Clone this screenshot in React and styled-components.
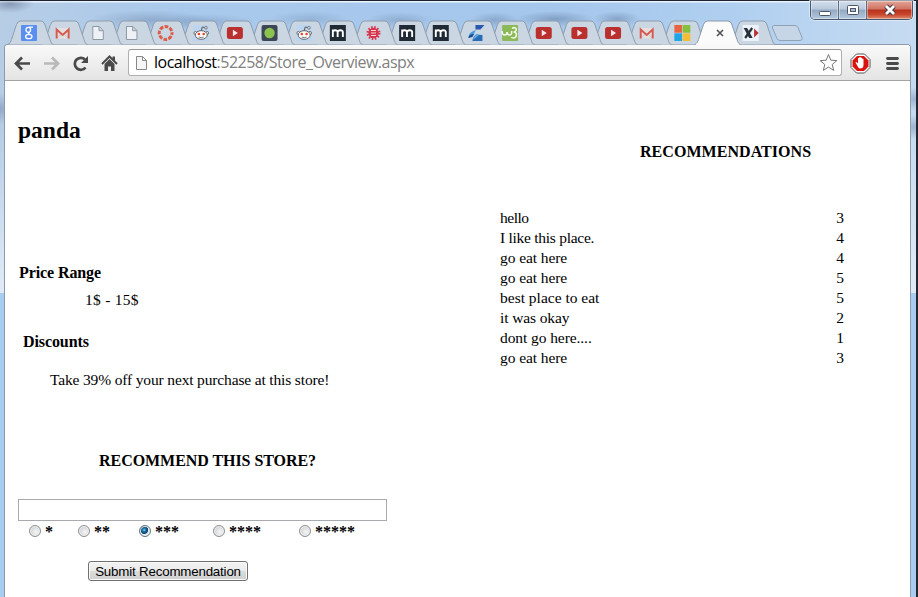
import React, { useState } from "react";
import styled, { createGlobalStyle } from "styled-components";

const GlobalStyle = createGlobalStyle`
  * { box-sizing: border-box; }
  body { margin: 0; overflow: hidden; }
  h1, h2, p { margin: 0; }
`;

const Window = styled.div`
  position: relative;
  width: 918px;
  height: 597px;
  display: flex;
  flex-direction: column;
  border-top: 1px solid #1d2230;
  border-right: 2px solid #23272f;
  background:
    radial-gradient(ellipse 24px 9px at 10px 3px, rgba(70, 80, 110, 0.4), transparent),
    radial-gradient(ellipse 60px 10px at 150px 19px, rgba(70, 95, 130, 0.28), transparent),
    radial-gradient(ellipse 50px 8px at 205px 21px, rgba(70, 95, 130, 0.25), transparent),
    radial-gradient(ellipse 40px 8px at 310px 18px, rgba(70, 95, 130, 0.2), transparent),
    radial-gradient(ellipse 34px 8px at 400px 19px, rgba(70, 95, 130, 0.25), transparent),
    radial-gradient(ellipse 24px 8px at 495px 19px, rgba(70, 95, 130, 0.3), transparent),
    radial-gradient(ellipse 40px 8px at 555px 18px, rgba(70, 95, 130, 0.38), transparent),
    radial-gradient(ellipse 24px 8px at 617px 18px, rgba(70, 95, 130, 0.35), transparent),
    radial-gradient(ellipse 20px 16px at 0 108px, rgba(60, 90, 130, 0.3), transparent),
    radial-gradient(ellipse 14px 12px at 914px 98px, rgba(60, 90, 130, 0.3), transparent),
    radial-gradient(ellipse 14px 12px at 914px 126px, rgba(60, 90, 130, 0.3), transparent),
    linear-gradient(180deg, #e9f3fc 0, #e9f3fc 1px, transparent 2px),
    linear-gradient(180deg, transparent 130px, #dfeaf6 285px, #dfeaf6 292px, #a9cdf1 292px),
    linear-gradient(90deg, #b7cde6 0, #a9c9ec 20%, #a5c7ec 60%, #b0cff0 80%, #c6dbf1 100%);
`;

const TabStrip = styled.div`
  position: relative;
  z-index: 1;
  display: flex;
  height: 43px;
  padding: 19px 0 0 8px;
`;

const TabShape = styled.svg`
  position: relative;
  z-index: ${(p) => p.$layer};
  flex: none;
  width: 46px;
  height: 26px;
  margin-right: -11.65px;
  overflow: visible;
`;

const NewTab = styled.svg`
  flex: none;
  width: 34px;
  height: 18px;
  margin: 4px 0 0 6px;
`;

const WindowControls = styled.div`
  position: absolute;
  z-index: 2;
  top: 0;
  right: 3px;
  display: flex;
  width: 103px;
  height: 19px;
  border: 1px solid #46566b;
  border-top: 0;
  border-radius: 0 0 5px 5px;
  overflow: hidden;
  box-shadow: 0 0 0 1px rgba(235, 245, 255, 0.6);
`;

const ControlButton = styled.button`
  display: flex;
  align-items: center;
  justify-content: center;
  flex: ${(p) => (p.$close ? "1" : "0 0 28px")};
  padding: 0;
  border: 0;
  border-right: ${(p) => (p.$close ? "0" : "1px solid #5c6b80")};
  box-shadow: inset 0 0 0 1px rgba(255, 255, 255, 0.4);
  background: ${(p) =>
    p.$close
      ? "linear-gradient(#e2a596 0, #d07363 45%, #b8301c 50%, #c9472d 75%, #dd8a6c 100%)"
      : "linear-gradient(#d3dfed 0, #b9c9dc 45%, #93a9c2 50%, #b4c8de 100%)"};
`;

const Frame = styled.div`
  flex: 1;
  display: flex;
  flex-direction: column;
  margin: 0 5px 0 4px;
  border: 1px solid #8d9aa9;
  border-bottom: 0;
  border-radius: 4px 4px 0 0;
  background: #fff;
  overflow: hidden;
`;

const Toolbar = styled.div`
  display: flex;
  align-items: center;
  flex: 0 0 36px;
  border-bottom: 1px solid #a4a4a4;
  background: linear-gradient(#f9f9f9, #e4e4e4);
`;

const NavIcons = styled.svg`
  flex: none;
  width: 123px;
  height: 34px;
`;

const AddressBar = styled.div`
  display: flex;
  align-items: center;
  flex: none;
  width: 714px;
  height: 27px;
  padding: 0 3px 0 6px;
  border: 1px solid #b0b0b0;
  border-top-color: #989898;
  border-radius: 3px;
  background: #fff;
`;

const Address = styled.span`
  flex: 1;
  margin: -2px 0 0 6px;
  font: 16px/24px "Open Sans", "Noto Sans", sans-serif;
  letter-spacing: -0.5px;
  color: #808080;
`;

const Host = styled.span`
  color: #000;
`;

const ActionIcons = styled.svg`
  flex: none;
  width: 67px;
  height: 34px;
`;

const Page = styled.main`
  display: grid;
  grid-template-columns: 482px 1fr;
  padding-left: 13px;
  font: 15.5px/20px "Liberation Serif", serif;
  color: #000;
`;

const Column = styled.section`
  display: flex;
  flex-direction: column;
  align-items: flex-start;
`;

const StoreName = styled.h1`
  margin: 35px 0 0;
  font-size: 23.5px;
  line-height: 28px;
`;

const Heading = styled.h2`
  margin: ${(p) => p.$top}px 0 0 ${(p) => p.$left}px;
  font-size: 16px;
  line-height: 20px;
  letter-spacing: ${(p) => p.$tracking || 0}px;
`;

const Copy = styled.p`
  margin: ${(p) => p.$top}px 0 0 ${(p) => p.$left}px;
  letter-spacing: ${(p) => p.$tracking || 0}px;
`;

const CommentInput = styled.input`
  width: 369px;
  height: 22px;
  margin-top: 28px;
  border: 1px solid #a9a9b0;
  outline: 0;
`;

const Ratings = styled.div`
  display: grid;
  grid-template-columns: 49px 61px 74px 86px 60px;
  height: 20px;
  margin-left: 11px;
`;

const Rating = styled.label`
  display: flex;
  align-items: center;
  gap: 4px;
  font-weight: bold;
  font-size: 16px;
`;

const Radio = styled.input`
  appearance: none;
  width: 12px;
  height: 12px;
  margin: 0;
  border: 1px solid #8e8f8f;
  border-radius: 50%;
  background: radial-gradient(circle at 60% 60%, #f6f6f6, #cfd2d6 70%);
  box-shadow: inset 0 0 0 1px #f4f4f4;
  &:checked {
    border-color: #5d7285;
    background: radial-gradient(circle at 42% 40%, #7fd3f2 0, #1f80b4 18%, #0c3a5c 42%, #dfe7ee 52%);
  }
`;

const Stars = styled.span`
  height: 20px;
  line-height: 21px;
`;

const SubmitButton = styled.button`
  width: 160px;
  height: 20px;
  margin: 20px 0 0 70px;
  padding: 0;
  border: 1px solid #707070;
  border-radius: 3px;
  box-shadow: inset 0 0 0 1px #fafafa;
  background: linear-gradient(#f2f2f2 0, #ebebeb 50%, #dddddd 50%, #cfcfcf 100%);
  font: 13.33px/17px "Liberation Sans", Arial, sans-serif;
  letter-spacing: -0.19px;
  white-space: nowrap;
  color: #000;
`;

const ReviewList = styled.div`
  display: flex;
  flex-direction: column;
  width: 344px;
  margin-top: 46px;
`;

const Review = styled.div`
  display: flex;
  justify-content: space-between;
  height: 20px;
`;

const ReviewText = styled.span`
  letter-spacing: ${(p) => p.$tracking}px;
`;

const youtube = (
  <>
    <rect x="0" y="2" width="16" height="12" rx="2.5" fill="#b9302f" />
    <path d="M6 4.7v6.6L11 8z" fill="#f4e8e8" />
  </>
);
const gmail = (
  <>
    <path d="M1 3h14v10.500H1z" fill="#e4e0e0" />
    <path d="M2 13.500l4.500-4.500M14 13.500l-4.500-4.500" stroke="#c6c2c2" fill="none" />
    <path d="M2 13.500V4.500l6 5.500 6-5.500v9" stroke="#d65a52" strokeWidth="2" fill="none" />
  </>
);
const blank = (
  <path d="M2.5 1.5h6.5l4 4v9H2.5zM8.7 1.7v4h4" fill="#eef2f6" stroke="#8c98a4" />
);
const reddit = (
  <>
    <path d="M0 0h16v16H0z" fill="#bdd5ef" />
    <path d="M8 6l1-4 3 .6" stroke="#555" fill="none" />
    <circle cx="12.7" cy="2.8" r="1.3" fill="#fff" stroke="#555" strokeWidth=".8" />
    <circle cx="2.2" cy="8" r="1.5" fill="#fff" stroke="#555" strokeWidth=".8" />
    <circle cx="13.8" cy="8" r="1.5" fill="#fff" stroke="#555" strokeWidth=".8" />
    <ellipse cx="8" cy="10" rx="6" ry="4.3" fill="#fff" stroke="#555" strokeWidth=".9" />
    <circle cx="5.6" cy="9" r="1.3" fill="#ef4023" />
    <circle cx="10.4" cy="9" r="1.3" fill="#ef4023" />
    <path d="M5.5 12q2.5 1.4 5 0" stroke="#555" fill="none" strokeWidth=".8" />
  </>
);
const mark = (
  <>
    <path d="M0 0h16v16H0z" fill="#202a34" />
    <path d="M3 12V4.5M3 7q0-1.8 2.3-1.8T7.8 7v5M8 7q.2-1.8 2.6-1.8T13 7v5" stroke="#fff" strokeWidth="1.9" fill="none" />
  </>
);

const favicons = {
  google: (
    <>
      <rect width="16" height="16" rx="1" fill="#5a8ef0" />
      <g fill="none" stroke="#fff" strokeWidth="1.3">
        <ellipse cx="7.300" cy="4.800" rx="2.300" ry="2.500" />
        <path d="M8 2.200h4M8.500 7.200q-2.500 1.300.5 2.200" />
        <ellipse cx="7.800" cy="11.500" rx="3.200" ry="2.200" />
      </g>
    </>
  ),
  gmail,
  blank,
  canvas: (
    <circle cx="8" cy="8" r="6.400" fill="none" stroke="#dd5c48" strokeWidth="3" strokeDasharray="3.700 1.327" strokeDashoffset="1.800" />
  ),
  reddit,
  youtube,
  green: (
    <>
      <rect width="16" height="16" rx="2" fill="#3d4654" />
      <circle cx="8" cy="8" r="5.200" fill="#8bc34e" />
    </>
  ),
  mark,
  burst: (
    <>
      <circle cx="8" cy="8" r="5.800" fill="none" stroke="#d8344b" strokeWidth="2.400" strokeDasharray="1.500 1.537" />
      <circle cx="8" cy="8" r="5.200" fill="#d8344b" />
      <path d="M5.500 5.500h5M5.500 8h5M5.500 10.500h5" stroke="#f0d8df" strokeWidth="1.100" />
    </>
  ),
  blue: (
    <>
      <path d="M7 0h9l-4 4.500H7z" fill="#2b57b0" />
      <path d="M0 13C0 8 4 6 7.500 5L5 10z" fill="#4a9bdc" />
      <path d="M0 13C0 11 2 9 5.500 9L4 12z" fill="#1d4a90" />
      <path d="M8 9q2 1 6 1v6H4q0-4 4-7z" fill="#2a6bb5" />
      <path d="M8 9q-3 3-3.500 6l6-5z" fill="#63b4e4" />
    </>
  ),
  w3: (
    <>
      <rect width="16" height="16" rx="1" fill="#8cb957" />
      <path d="M0 6q0 4 2.500 4T5 7q0 3 2.500 3T9.500 6M10 3.500q1-1 2.500-.8 2 .3 1.500 2.500-.5 1.700-2.500 1.800 3 .2 2.800 3-.3 3-3 3-1.500 0-2-1" fill="none" stroke="#f3f8ec" strokeWidth="1.600" />
    </>
  ),
  microsoft: (
    <>
      <path d="M0 0h7.700v7.700H0z" fill="#e86542" />
      <path d="M8.300 0H16v7.700H8.300z" fill="#86bf3a" />
      <path d="M0 8.300h7.700V16H0z" fill="#22a5e4" />
      <path d="M8.300 8.300H16V16H8.300z" fill="#f4bd33" />
    </>
  ),
  close: <path d="M9 5l6 6M15 5l-6 6" stroke="#555" strokeWidth="1.700" />,
  xsplit: (
    <>
      <path d="M0 0h16v16H0z" fill="#edf2f8" />
      <path d="M1 3h3.500l5.500 10H6.500z" fill="#26303a" />
      <path d="M9.500 3L2.500 13" stroke="#26303a" strokeWidth="2.200" />
      <path d="M11.500 3.500v9l4.500-4.500z" fill="#b82f35" />
    </>
  ),
};

const tabs = [
  "google", "gmail", "blank", "blank", "canvas", "reddit", "youtube", "green", "reddit", "mark", "burst",
  "mark", "mark", "blue", "w3", "youtube", "youtube", "youtube", "gmail", "microsoft", "close", "xsplit",
];

const PITCH = 34.35;

function Tab({ index, icon }) {
  const active = icon === "close";
  const snap = Math.round(index * PITCH) - index * PITCH;
  return (
    <TabShape $layer={active ? 40 : 30 - index} viewBox="0 0 46 26">
      <path
        d="M-.5 24.500C2 24 2.500 22 3.500 19.500L8.500 4.500Q9.800 1 12.500 1H33Q35.500 1 36.700 4L42 19.500C43 22.500 43.500 24 45.500 24.500"
        fill={active ? "#fbfbfb" : "#cbd6e3"}
        stroke={active ? "#8b98a6" : "#8e9dae"}
      />
      {active && <path d="M1 23.500h43v2H1z" fill="#f9f9f9" />}
      <g transform={`translate(${13 + snap} 5)`}>{favicons[icon]}</g>
    </TabShape>
  );
}

const reviews = [
  { text: "hello", score: 3, tracking: -0.5 },
  { text: "I like this place.", score: 4, tracking: -0.27 },
  { text: "go eat here", score: 4, tracking: -0.08 },
  { text: "go eat here", score: 5, tracking: -0.08 },
  { text: "best place to eat", score: 5, tracking: 0 },
  { text: "it was okay", score: 2, tracking: -0.12 },
  { text: "dont go here....", score: 1, tracking: -0.08 },
  { text: "go eat here", score: 3, tracking: -0.08 },
];

export default function App() {
  const [rating, setRating] = useState(3);
  return (
    <>
      <GlobalStyle />
      <Window>
        <TabStrip>
          {tabs.map((icon, i) => (
            <Tab key={i} index={i} icon={icon} />
          ))}
          <NewTab viewBox="0 0 34 18">
            <path d="M3.500 1.500H25q2 0 3 2l4 10q.8 3-2 3H10q-2 0-3-2L2.500 4q-.8-2.500 1-2.500z" fill="#c7d6e7" stroke="#91a2b5" />
          </NewTab>
        </TabStrip>
        <WindowControls>
          <ControlButton aria-label="Minimize">
            <svg width="14" height="12"><rect x="1.500" y="7.500" width="11" height="4" rx="1" fill="#fff" stroke="#4c5666" /></svg>
          </ControlButton>
          <ControlButton aria-label="Maximize">
            <svg width="14" height="12">
              <rect x="1.500" y="1.500" width="11" height="9" rx="1" fill="#fff" stroke="#4c5666" />
              <rect x="4.500" y="4.500" width="5" height="3" fill="#a9bcd1" stroke="#4c5666" />
            </svg>
          </ControlButton>
          <ControlButton $close aria-label="Close">
            <svg width="14" height="12">
              <path d="M3 2l8 8M11 2l-8 8" stroke="#4b3b47" strokeWidth="5" />
              <path d="M3 2l8 8M11 2l-8 8" stroke="#fff" strokeWidth="2.800" />
            </svg>
          </ControlButton>
        </WindowControls>
        <Frame>
          <Toolbar>
            <NavIcons viewBox="5 45 123 34">
              <path d="M30 62.500H17M22 56.500l-6 6 6 6" fill="none" stroke="#4a4a4a" strokeWidth="2.700" />
              <path d="M44 62.500h13M52 56.500l6 6-6 6" fill="none" stroke="#b9b9b9" strokeWidth="2.700" />
              <path d="M85.500 66.500a6 6 0 1 1-.5-8" fill="none" stroke="#4a4a4a" strokeWidth="2.700" />
              <path d="M88 55v7h-7z" fill="#4a4a4a" />
              <path d="M102 63l7.500-7.500L117 63" fill="none" stroke="#4a4a4a" strokeWidth="2" />
              <path d="M104.500 63l5-5 5 5v7h-3.500v-4.500h-3V70h-3.500zM112.500 55.500h2.500v5l-2.500-2.500z" fill="#4a4a4a" />
            </NavIcons>
            <AddressBar>
              <svg width="13" height="16"><path d="M1.500 1.500h6l4 4v9h-10zM7.500 1.500v4h4" fill="#f6f6f6" stroke="#888" /></svg>
              <Address>
                <Host>localhost</Host>:52258/Store_Overview.aspx
              </Address>
              <svg width="19" height="19" viewBox="0 0 19 19">
                <path d="M9.500 1.500l2.300 5.700 6 .4-4.600 3.900 1.500 5.900-5.200-3.300-5.200 3.300 1.500-5.900L1.200 7.600l6-.4z" fill="#fff" stroke="#777" strokeLinejoin="round" />
              </svg>
            </AddressBar>
            <ActionIcons viewBox="842 45 67 34">
              <path d="M856.500 53h8l5.500 5.500v8l-5.500 5.500h-8l-5.500-5.500v-8z" fill="#fff" stroke="#555" />
              <path d="M857 55h7l4.500 4.500v6L864 70h-7l-4.500-4.500v-6z" fill="#d9140f" />
              <path d="M857.500 65l-2-3.500 1-.5 1.500 1.500V57h1.300v-1h1.400v.7h1.400v1h1.400V64q0 3.500-3.500 3.500-1.500 0-2.500-2.500z" fill="#fff" />
              <path d="M887.500 57.500h10M887.500 62.500h10M887.500 67.500h10" stroke="#4a4a4a" strokeWidth="2.800" strokeLinecap="round" />
            </ActionIcons>
          </Toolbar>
          <Page>
            <Column>
              <StoreName>panda</StoreName>
              <Heading $top={119} $left={1} $tracking={-0.1}>Price Range</Heading>
              <Copy $top={7} $left={67} $tracking={0.25}>1$ - 15$</Copy>
              <Heading $top={22} $left={5} $tracking={-0.1}>Discounts</Heading>
              <Copy $top={18} $left={32} $tracking={-0.15}>Take 39% off your next purchase at this store!</Copy>
              <Heading $top={61} $left={81} $tracking={-0.05}>RECOMMEND THIS STORE?</Heading>
              <CommentInput aria-label="Recommendation" />
              <Ratings>
                {[1, 2, 3, 4, 5].map((n) => (
                  <Rating key={n}>
                    <Radio type="radio" name="rating" checked={rating === n} onChange={() => setRating(n)} />
                    <Stars>{"*".repeat(n)}</Stars>
                  </Rating>
                ))}
              </Ratings>
              <SubmitButton type="button">Submit Recommendation</SubmitButton>
            </Column>
            <Column>
              <Heading $top={61} $left={140} $tracking={0.05}>RECOMMENDATIONS</Heading>
              <ReviewList>
                {reviews.map(({ text, score, tracking }, i) => (
                  <Review key={i}>
                    <ReviewText $tracking={tracking}>{text}</ReviewText>
                    <span>{score}</span>
                  </Review>
                ))}
              </ReviewList>
            </Column>
          </Page>
        </Frame>
      </Window>
    </>
  );
}
